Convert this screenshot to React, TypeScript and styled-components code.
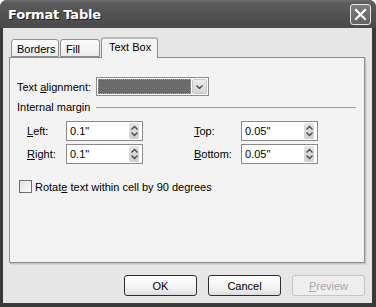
import React from "react";
import styled, { createGlobalStyle } from "styled-components";

const Global = createGlobalStyle`
  html, body { margin: 0; padding: 0; background: #ffffff; }
  body { font-family: "Liberation Sans", Arial, sans-serif; font-size: 11px; color: #000; }
  * { box-sizing: border-box; }
`;

const Window = styled.div`
  width: 376px;
  height: 307px;
  display: flex;
  flex-direction: column;
  background: #3a3a3a;
  border-radius: 7px 7px 0 0;
  overflow: hidden;
`;

const TitleBar = styled.div`
  height: 28px;
  flex: 0 0 28px;
  display: flex;
  align-items: center;
  justify-content: space-between;
  padding: 0 5px 0 8px;
  background: linear-gradient(#6e6e6e 0px, #5c5c5c 3px, #525252 14px, #4a4a4a 28px);
`;

const Title = styled.span`
  color: #ffffff;
  font-family: "DejaVu Sans", Verdana, sans-serif;
  font-weight: bold;
  font-size: 13px;
  letter-spacing: -0.2px;
  text-shadow: 1px 1px 0 #222;
`;

const CloseButton = styled.div`
  width: 21px;
  height: 21px;
  border: 1px solid #e8e8e8;
  border-radius: 3px;
  background: linear-gradient(#7e7e7e, #626262);
  display: flex;
  align-items: center;
  justify-content: center;
`;

const Body = styled.div`
  flex: 1;
  margin: 0 4px 4px 3px;
  background: #e6e6e6;
  padding: 8px 7px 7px 6px;
  display: flex;
  flex-direction: column;
`;

const TabRow = styled.div`
  display: flex;
  align-items: flex-end;
  height: 21px;
  padding-left: 2px;
  position: relative;
  z-index: 1;
`;

const Tab = styled.div<{ $active?: boolean; $w: number }>`
  width: ${(p) => p.$w}px;
  height: ${(p) => (p.$active ? 21 : 18)}px;
  margin-right: ${(p) => (p.$active ? 0 : 1)}px;
  margin-bottom: ${(p) => (p.$active ? -1 : 0)}px;
  border: 1px solid #8e8e8e;
  border-bottom: ${(p) => (p.$active ? "none" : "1px solid #8e8e8e")};
  border-top: ${(p) => (p.$active ? "2px solid #b9b9b9" : "1px solid #8e8e8e")};
  border-radius: 3px 3px 0 0;
  background: ${(p) => (p.$active ? "#f3f3f3" : "linear-gradient(#fafafa, #ececec)")};
  padding: ${(p) => (p.$active ? "2px 0 0 7px" : "3px 0 0 5px")};
  font-size: 11px;
  white-space: nowrap;
`;

const Panel = styled.div`
  height: 206px;
  background: #f3f3f3;
  border: 1px solid #8e8e8e;
  box-shadow: 1px 1px 0 #c4c4c4, 2px 2px 0 #d8d8d8;
  padding: 19px 8px 0 7px;
  display: flex;
  flex-direction: column;
`;

const Row = styled.div`
  display: flex;
  align-items: center;
  height: 19px;
`;

const Label = styled.span<{ $w?: number }>`
  display: inline-block;
  width: ${(p) => (p.$w ? `${p.$w}px` : "auto")};
  white-space: nowrap;
`;

const Combo = styled.div`
  margin-left: 5px;
  width: 113px;
  height: 19px;
  border: 1px solid #8a8a8a;
  background: #fff;
  padding: 1px;
  display: flex;
  align-items: stretch;
  gap: 1px;
`;

const ComboValue = styled.div`
  flex: 1;
  background: #6b6b6b;
  outline: 1px dotted #a4a4a4;
  outline-offset: -1px;
`;

const ComboButton = styled.div`
  width: 15px;
  background: linear-gradient(#ececec, #d4d4d4);
  border: 1px solid #c8c8c8;
  border-radius: 2px;
  display: flex;
  align-items: center;
  justify-content: center;
`;

const GroupHeader = styled.div`
  display: flex;
  align-items: center;
  margin-top: 2px;
  height: 17px;
`;

const GroupLine = styled.div`
  flex: 1;
  height: 1px;
  background: #9a9a9a;
  margin-left: 6px;
  margin-top: 1px;
`;

const MarginGrid = styled.div`
  display: grid;
  grid-template-columns: 39px 77px 51px 47px 77px;
  row-gap: 3px;
  margin-top: 6px;
  padding-left: 10px;
  align-items: center;
`;

const Spin = styled.div`
  height: 20px;
  border: 1px solid #8a8a8a;
  background: #fff;
  display: flex;
  align-items: center;
  justify-content: space-between;
  padding: 0 3px 0 3px;
`;

const SpinButton = styled.div`
  width: 10px;
  height: 16px;
  background: linear-gradient(#e4e4e4, #cfcfcf);
  border-radius: 2px;
  display: flex;
  align-items: center;
  justify-content: center;
`;

const CheckRow = styled.div`
  display: flex;
  align-items: center;
  margin-top: 16px;
  padding-left: 2px;
  gap: 3px;
`;

const CheckBox = styled.div`
  width: 13px;
  height: 13px;
  border: 1px solid #6e6e6e;
  background: linear-gradient(135deg, #e2e2e2, #fbfbfb);
`;

const ButtonRow = styled.div`
  display: flex;
  justify-content: flex-end;
  gap: 11px;
  margin-top: 12px;
`;

const Button = styled.div<{ $disabled?: boolean }>`
  width: 73px;
  height: 21px;
  border: 1px solid ${(p) => (p.$disabled ? "#c4c4c4" : "#2e2e2e")};
  border-radius: 3px;
  background: ${(p) => (p.$disabled ? "#eeeeee" : "linear-gradient(#ffffff, #f0f0f0 70%, #dcdcdc)")};
  color: ${(p) => (p.$disabled ? "#a8a8a8" : "#000")};
  display: flex;
  align-items: center;
  justify-content: center;
`;

const U = styled.span`
  text-decoration: underline;
`;

const Chevron = () => (
  <svg width="7" height="4" viewBox="0 0 7 4">
    <path d="M0.5 0.5 L3.5 3.5 L6.5 0.5" stroke="#4a4a4a" strokeWidth="1.4" fill="none" />
  </svg>
);

const Spinner = ({ value }: { value: string }) => (
  <Spin>
    <span>{value}</span>
    <SpinButton>
      <svg width="7" height="12" viewBox="0 0 7 12">
        <path d="M0.5 4.5 L3.5 1.5 L6.5 4.5" stroke="#4a4a4a" strokeWidth="1.4" fill="none" />
        <path d="M0.5 7.5 L3.5 10.5 L6.5 7.5" stroke="#4a4a4a" strokeWidth="1.4" fill="none" />
      </svg>
    </SpinButton>
  </Spin>
);

export default function App() {
  return (
    <>
      <Global />
      <Window>
        <TitleBar>
          <Title>Format Table</Title>
          <CloseButton>
            <svg width="13" height="13" viewBox="0 0 13 13">
              <path d="M2 2 L11 11 M11 2 L2 11" stroke="#fff" strokeWidth="2.2" strokeLinecap="square" />
            </svg>
          </CloseButton>
        </TitleBar>
        <Body>
          <TabRow>
            <Tab $w={48}>Borders</Tab>
            <Tab $w={40}>Fill</Tab>
            <Tab $w={57} $active>Text Box</Tab>
          </TabRow>
          <Panel>
            <Row>
              <Label $w={74}>
                Text <U>a</U>lignment:
              </Label>
              <Combo>
                <ComboValue />
                <ComboButton>
                  <Chevron />
                </ComboButton>
              </Combo>
            </Row>
            <GroupHeader>
              <Label>Internal margin</Label>
              <GroupLine />
            </GroupHeader>
            <MarginGrid>
              <Label>
                <U>L</U>eft:
              </Label>
              <Spinner value={'0.1"'} />
              <span />
              <Label>
                <U>T</U>op:
              </Label>
              <Spinner value={'0.05"'} />
              <Label>
                <U>R</U>ight:
              </Label>
              <Spinner value={'0.1"'} />
              <span />
              <Label>
                <U>B</U>ottom:
              </Label>
              <Spinner value={'0.05"'} />
            </MarginGrid>
            <CheckRow>
              <CheckBox />
              <Label>
                Rotat<U>e</U> text within cell by 90 degrees
              </Label>
            </CheckRow>
          </Panel>
          <ButtonRow>
            <Button>OK</Button>
            <Button>Cancel</Button>
            <Button $disabled>
              <span>
                <U>P</U>review
              </span>
            </Button>
          </ButtonRow>
        </Body>
      </Window>
    </>
  );
}
